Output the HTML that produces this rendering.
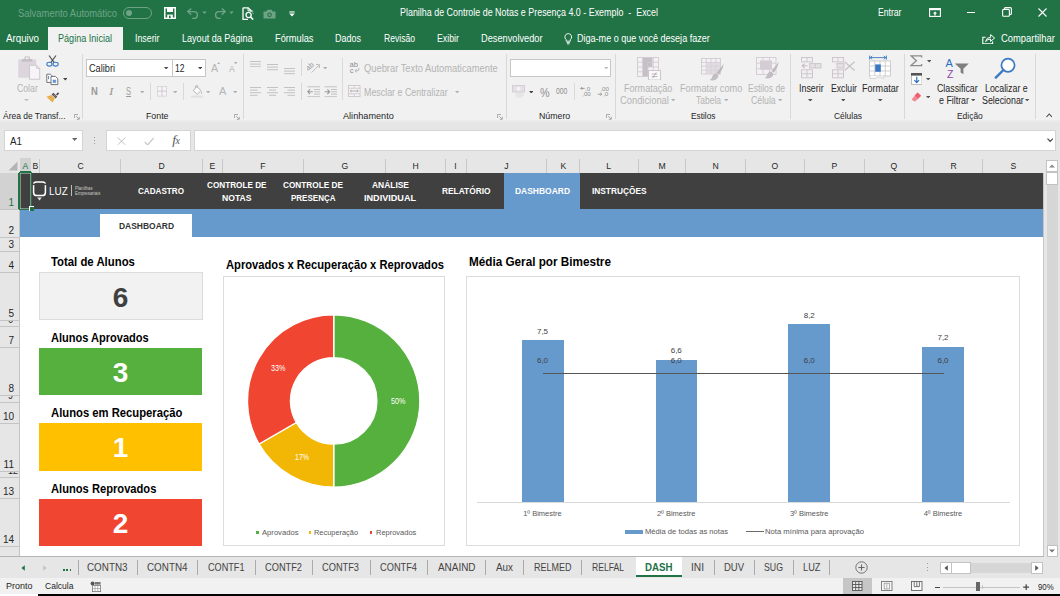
<!DOCTYPE html>
<html lang="pt-BR"><head><meta charset="utf-8"><title>Planilha de Controle de Notas e Presença 4.0 - Exemplo - Excel</title>
<style>
html,body{margin:0;padding:0;background:#fff;overflow:hidden;}
#app{position:relative;width:1060px;height:596px;overflow:hidden;background:#fff;font-family:"Liberation Sans", "DejaVu Sans", sans-serif;}
.r{position:absolute;display:block;box-sizing:border-box;}
.t{position:absolute;white-space:pre;line-height:1.15;transform-origin:0 50%;font-family:"Liberation Sans", "DejaVu Sans", sans-serif;}
</style></head>
<body><div id="app">
<div class="r" style="left:0px;top:0px;width:1060px;height:50px;background:#217346;"></div>
<span class="t" style="top:7.80px;font-size:10px;color:#6fa386;left:18.00px;transform:scaleX(0.9423);">Salvamento Automático</span>
<div class="r" style="left:123px;top:7px;width:29px;height:12px;border:1px solid #6fa386;border-radius:7px"></div>
<div class="r" style="left:126px;top:10px;width:6px;height:6px;border-radius:3px;background:#6fa386"></div>
<span class="t" style="top:6.60px;font-size:10px;color:#fff;left:400.00px;transform:scaleX(0.8909);">Planilha de Controle de Notas e Presença 4.0 - Exemplo  -  Excel</span>
<span class="t" style="top:6.60px;font-size:10px;color:#fff;left:878.00px;transform:scaleX(0.8629);">Entrar</span>
<svg class="r" style="left:164px;top:7px;" width="12" height="12" viewBox="0 0 12 12"><path d="M0.8,0.8 H11.2 V11.2 H0.8 Z" fill="none" stroke="#fff" stroke-width="1.5"/><rect x="3" y="1" width="6" height="4" fill="#fff"/><rect x="3.2" y="7.6" width="5.6" height="3.6" fill="#fff"/><rect x="5" y="8.6" width="1.6" height="2.6" fill="#217346"/></svg>
<svg class="r" style="left:186px;top:7px;" width="14" height="12" viewBox="0 0 14 12"><path d="M2,4.6 H8 A3.4,3.4 0 0 1 8,11.4 H6.2" fill="none" stroke="#6fa386" stroke-width="1.4"/><path d="M5.2,1.4 L1.8,4.6 L5.2,7.8" fill="none" stroke="#6fa386" stroke-width="1.4"/></svg>
<svg class="r" style="left:202px;top:11px;" width="5" height="4" viewBox="0 0 5 4"><path d="M0.3,0.5 H4.7 L2.5,3 Z" fill="#6fa386"/></svg>
<svg class="r" style="left:213px;top:7px;" width="14" height="12" viewBox="0 0 14 12"><path d="M12,4.6 H6 A3.4,3.4 0 0 0 6,11.4 H7.8" fill="none" stroke="#6fa386" stroke-width="1.4"/><path d="M8.8,1.4 L12.2,4.6 L8.8,7.8" fill="none" stroke="#6fa386" stroke-width="1.4"/></svg>
<svg class="r" style="left:229px;top:11px;" width="5" height="4" viewBox="0 0 5 4"><path d="M0.3,0.5 H4.7 L2.5,3 Z" fill="#6fa386"/></svg>
<svg class="r" style="left:241.5px;top:6.5px;" width="12" height="13.5" viewBox="0 0 12 13.5"><path d="M1,0.8 H6.2 L9,3.6 V5 M6,12.4 H1 V0.8" fill="none" stroke="#fff" stroke-width="1.3"/><path d="M6,0.8 V3.8 H9" fill="none" stroke="#fff" stroke-width="1"/><circle cx="6.6" cy="8" r="2.6" fill="#217346" stroke="#fff" stroke-width="1.3"/><path d="M8.6,10 L11.2,12.6" stroke="#fff" stroke-width="1.6"/><path d="M9.6,3.2 l1.4,1.6 M10.4,5.6 l0.8,1" stroke="#fff" stroke-width="0.8"/></svg>
<svg class="r" style="left:262.5px;top:8.5px;" width="13" height="10" viewBox="0 0 13 10"><path d="M0.5,2.5 H3.4 L4.4,0.8 H8.6 L9.6,2.5 H12.5 V9.5 H0.5 Z" fill="#6fa386"/><circle cx="6.5" cy="5.8" r="2.3" fill="#217346"/><circle cx="6.5" cy="5.8" r="1.2" fill="#6fa386"/></svg>
<svg class="r" style="left:288.5px;top:10.5px;" width="6" height="6" viewBox="0 0 6 6"><rect x="0.4" y="0.4" width="5.2" height="1.1" fill="#fff"/><path d="M0.2,2.6 H5.8 L3,5.6 Z" fill="#fff"/></svg>
<svg class="r" style="left:928.5px;top:7.5px;" width="12" height="9" viewBox="0 0 12 9"><rect x="0.6" y="0.6" width="10.8" height="7.8" fill="none" stroke="#fff" stroke-width="1.1"/><rect x="0.6" y="0.6" width="10.8" height="1.6" fill="#fff"/><path d="M6,3.4 L8.2,5.6 H6.7 V7.4 H5.3 V5.6 H3.8 Z" fill="#fff"/></svg>
<div class="r" style="left:966.5px;top:12px;width:8.5px;height:1px;background:#fff;"></div>
<svg class="r" style="left:1001.5px;top:7px;" width="10" height="10" viewBox="0 0 10 10"><rect x="0.6" y="2.4" width="6.8" height="6.8" rx="1" fill="none" stroke="#fff" stroke-width="1.1"/><path d="M2.6,2.4 V1.4 Q2.6,0.6 3.4,0.6 H8.4 Q9.4,0.6 9.4,1.6 V6.4 Q9.4,7.4 8.4,7.4 H7.4" fill="none" stroke="#fff" stroke-width="1.1"/></svg>
<svg class="r" style="left:1038px;top:7.7px;" width="9" height="9" viewBox="0 0 9 9"><path d="M0.5,0.5 L8.5,8.5 M8.5,0.5 L0.5,8.5" stroke="#fff" stroke-width="1.1"/></svg>
<svg class="r" style="left:564px;top:33px;" width="8.5" height="11.5" viewBox="0 0 8.5 11.5"><path d="M4.25,0.6 A3.4,3.4 0 0 1 6.3,6.7 V8.2 H2.2 V6.7 A3.4,3.4 0 0 1 4.25,0.6 Z" fill="none" stroke="#fff" stroke-width="0.9"/><path d="M2.6,9.6 H5.9 M3,10.9 H5.5" stroke="#fff" stroke-width="0.9"/></svg>
<svg class="r" style="left:981.5px;top:32.5px;" width="13.5" height="11.5" viewBox="0 0 13.5 11.5"><path d="M3.6,4.2 H0.8 V10.8 H10.6 V8.4" fill="none" stroke="#fff" stroke-width="1.1"/><path d="M3.6,8.6 Q4.2,4.4 8.6,4.2 V1.6 L12.6,5 L8.6,8.4 V6 Q5.6,6 3.6,8.6 Z" fill="none" stroke="#fff" stroke-width="1"/></svg>
<div class="r" style="left:47.5px;top:27px;width:75px;height:23px;background:#f1f1f1;"></div>
<span class="t" style="top:33.00px;font-size:10px;color:#fff;left:6.00px;transform:scaleX(0.9733);">Arquivo</span>
<span class="t" style="top:33.00px;font-size:10px;color:#217346;left:57.50px;transform:scaleX(0.9078);">Página Inicial</span>
<span class="t" style="top:33.00px;font-size:10px;color:#fff;left:134.50px;transform:scaleX(0.8814);">Inserir</span>
<span class="t" style="top:33.00px;font-size:10px;color:#fff;left:181.50px;transform:scaleX(0.9057);">Layout da Página</span>
<span class="t" style="top:33.00px;font-size:10px;color:#fff;left:274.50px;transform:scaleX(0.9235);">Fórmulas</span>
<span class="t" style="top:33.00px;font-size:10px;color:#fff;left:335.00px;transform:scaleX(0.8995);">Dados</span>
<span class="t" style="top:33.00px;font-size:10px;color:#fff;left:383.50px;transform:scaleX(0.8578);">Revisão</span>
<span class="t" style="top:33.00px;font-size:10px;color:#fff;left:437.00px;transform:scaleX(0.8795);">Exibir</span>
<span class="t" style="top:33.00px;font-size:10px;color:#fff;left:481.00px;transform:scaleX(0.9218);">Desenvolvedor</span>
<span class="t" style="top:33.00px;font-size:10px;color:#fff;left:577.40px;transform:scaleX(0.9049);">Diga-me o que você deseja fazer</span>
<span class="t" style="top:33.00px;font-size:10px;color:#fff;left:1000.50px;transform:scaleX(0.9397);">Compartilhar</span>
<div class="r" style="left:0px;top:50px;width:1060px;height:70px;background:#f1f1f1;"></div>
<div class="r" style="left:0px;top:120px;width:1060px;height:38px;background:#e6e6e6;"></div>
<div class="r" style="left:0px;top:120px;width:1060px;height:2px;background:#ebebeb;"></div>
<div class="r" style="left:82px;top:54px;width:1px;height:64.5px;background:#d8d8d8;"></div>
<div class="r" style="left:243px;top:54px;width:1px;height:64.5px;background:#d8d8d8;"></div>
<div class="r" style="left:506px;top:54px;width:1px;height:64.5px;background:#d8d8d8;"></div>
<div class="r" style="left:614.5px;top:54px;width:1px;height:64.5px;background:#d8d8d8;"></div>
<div class="r" style="left:790px;top:54px;width:1px;height:64.5px;background:#d8d8d8;"></div>
<div class="r" style="left:904px;top:54px;width:1px;height:64.5px;background:#d8d8d8;"></div>
<div class="r" style="left:1034.5px;top:54px;width:1px;height:64.5px;background:#d8d8d8;"></div>
<span class="t" style="top:110.85px;font-size:9.5px;color:#262626;left:3.00px;transform:scaleX(0.8899);">Área de Transf...</span>
<span class="t" style="top:110.85px;font-size:9.5px;color:#262626;left:145.50px;transform:scaleX(0.9260);">Fonte</span>
<span class="t" style="top:110.85px;font-size:9.5px;color:#262626;left:343.00px;transform:scaleX(0.9609);">Alinhamento</span>
<span class="t" style="top:110.85px;font-size:9.5px;color:#262626;left:538.75px;transform:scaleX(0.9246);">Número</span>
<span class="t" style="top:110.85px;font-size:9.5px;color:#262626;left:690.50px;transform:scaleX(0.8755);">Estilos</span>
<span class="t" style="top:110.85px;font-size:9.5px;color:#262626;left:834.00px;transform:scaleX(0.8836);">Células</span>
<span class="t" style="top:110.85px;font-size:9.5px;color:#262626;left:957.00px;transform:scaleX(0.8877);">Edição</span>
<span class="t" style="top:82.70px;font-size:10px;color:#b4b4b4;left:17.00px;transform:scaleX(0.8701);">Colar</span>
<div class="r" style="left:86px;top:59px;width:86.5px;height:17.5px;background:#fff;border:1px solid #c6c6c6"></div>
<div class="r" style="left:172px;top:59px;width:33.5px;height:17.5px;background:#fff;border:1px solid #c6c6c6"></div>
<span class="t" style="top:63.00px;font-size:10px;color:#262626;left:89.00px;transform:scaleX(0.9173);">Calibri</span>
<span class="t" style="top:63.00px;font-size:10px;color:#262626;left:175.00px;transform:scaleX(0.8539);">12</span>
<span class="t" style="top:85.35px;font-size:10.5px;color:#9a9a9a;font-weight:700;left:91.40px;transform:scaleX(0.8955);">N</span>
<span class="t" style="top:85.10px;font-size:11px;color:#9a9a9a;font-style:italic;left:108.80px;transform:scaleX(1.1983);font-family:'Liberation Serif',serif;">I</span>
<span class="t" style="top:85.15px;font-size:10.5px;color:#9a9a9a;left:126.00px;transform:scaleX(0.7127);text-decoration:underline;">S</span>
<span class="t" style="top:61.80px;font-size:11.2px;color:#b4b4b4;left:210.70px;transform:scaleX(0.9506);">A</span>
<span class="t" style="top:63.90px;font-size:9px;color:#b4b4b4;left:228.50px;transform:scaleX(0.9642);">A</span>
<span class="t" style="top:85.10px;font-size:11.2px;color:#b4b4b4;left:218.60px;transform:scaleX(0.9908);">A</span>
<svg class="r" style="left:17px;top:56px;" width="24" height="25" viewBox="0 0 24 25"><rect x="1.2" y="3.4" width="18.1" height="18.3" fill="#dcd6dc"/><rect x="4.9" y="3" width="10.4" height="2.7" fill="#c6c0c6"/><path d="M7.9,3.2 V1.9 Q7.9,1 8.8,1 H11.6 Q12.5,1 12.5,1.9 V3.2" fill="none" stroke="#c6c0c6" stroke-width="1.1"/><path d="M12.5,9.3 H19.6 L22.7,12.4 V23.3 H12.5 Z" fill="#f7f4f7" stroke="#cbc5cb" stroke-width="0.9"/><path d="M19.6,9.3 V12.4 H22.7" fill="none" stroke="#cbc5cb" stroke-width="0.9"/></svg>
<svg class="r" style="left:24.3px;top:98.5px;" width="5" height="2.6" viewBox="0 0 5 2.6"><path d="M0,0 H5 L2.5,2.6 Z" fill="#c4c4c4"/></svg>
<svg class="r" style="left:45.5px;top:55px;" width="13" height="12" viewBox="0 0 13 12"><path d="M3,0.5 L8.3,7.6 M10,0.5 L4.7,7.6" stroke="#505050" stroke-width="1.15" fill="none"/><ellipse cx="3.4" cy="9.2" rx="2.6" ry="1.9" fill="none" stroke="#3b78c3" stroke-width="1.1"/><ellipse cx="9.6" cy="9.2" rx="2.6" ry="1.9" fill="none" stroke="#3b78c3" stroke-width="1.1"/></svg>
<svg class="r" style="left:45.5px;top:73px;" width="13" height="12.5" viewBox="0 0 13 12.5"><path d="M0.8,1.2 H4.4 L5.8,2.6 V9.4 H0.8 Z" fill="#fff" stroke="#666" stroke-width="0.9"/><path d="M2.6,3.4 V6.2 M2,4 L2.6,3.4" stroke="#3b78c3" stroke-width="0.9" fill="none"/><path d="M5,3.4 H9.4 L11.8,5.8 V11.6 H5 Z" fill="#fff" stroke="#666" stroke-width="0.9"/><rect x="6.6" y="6.6" width="3.6" height="3.4" fill="#8db6e6"/><path d="M7,7.6 H9.8 M7,8.8 H9.8" stroke="#3b78c3" stroke-width="0.6"/></svg>
<svg class="r" style="left:62.5px;top:78.10000000000001px;" width="4.6" height="2.6" viewBox="0 0 4.6 2.6"><path d="M0,0 H4.6 L2.3,2.6 Z" fill="#444"/></svg>
<svg class="r" style="left:45.5px;top:91px;" width="14" height="12" viewBox="0 0 14 12"><path d="M0.4,5.8 L6.4,11.4 L9,7.6 L5.2,4 Z" fill="#e8b04e"/><path d="M5.6,3.6 L9.6,7.4 L11.2,5.4 L7.4,1.8 Z" fill="#4a4a4a"/><path d="M10,3.4 L12,1.2 L13.2,2.4 L11.2,4.6 Z" fill="#4a4a4a"/><path d="M6.6,4.4 L8.8,6.4 M7.6,3.4 L9.8,5.4" stroke="#f1f1f1" stroke-width="0.5"/></svg>
<svg class="r" style="left:73.5px;top:113.5px;" width="6" height="6" viewBox="0 0 6 6"><path d="M0.5,4 V0.5 H4" fill="none" stroke="#9a9a9a" stroke-width="0.8"/><path d="M2.2,2.2 L5,5 M5.3,2.8 V5.3 H2.8" fill="none" stroke="#9a9a9a" stroke-width="0.8"/></svg>
<svg class="r" style="left:164.20000000000002px;top:66.8px;" width="4.4" height="2.4" viewBox="0 0 4.4 2.4"><path d="M0,0 H4.4 L2.2,2.4 Z" fill="#444"/></svg>
<svg class="r" style="left:197.5px;top:66.8px;" width="4.4" height="2.4" viewBox="0 0 4.4 2.4"><path d="M0,0 H4.4 L2.2,2.4 Z" fill="#444"/></svg>
<svg class="r" style="left:217.2px;top:61.8px;" width="3.4" height="2.4" viewBox="0 0 3.4 2.4"><path d="M0,2.4 H3.4 L1.7,0 Z" fill="#b0b0b0"/></svg>
<svg class="r" style="left:233.8px;top:61.8px;" width="3.4" height="2.4" viewBox="0 0 3.4 2.4"><path d="M0,0 H3.4 L1.7,2.4 Z" fill="#b0b0b0"/></svg>
<svg class="r" style="left:139.5px;top:90.8px;" width="4.4" height="2.4" viewBox="0 0 4.4 2.4"><path d="M0,0 H4.4 L2.2,2.4 Z" fill="#b0b0b0"/></svg>
<div class="r" style="left:149.7px;top:83px;width:1px;height:17px;background:#d8d8d8;"></div>
<svg class="r" style="left:157px;top:86px;" width="10" height="10.5" viewBox="0 0 10 10.5"><rect x="0.4" y="0.4" width="9.2" height="9.7" fill="#f6f4f6" stroke="#d6d0d6" stroke-width="0.8"/><path d="M5,0.4 V10.1 M0.4,5.2 H9.6" stroke="#d6d0d6" stroke-width="1.2"/></svg>
<svg class="r" style="left:172.8px;top:90.8px;" width="4.4" height="2.4" viewBox="0 0 4.4 2.4"><path d="M0,0 H4.4 L2.2,2.4 Z" fill="#b0b0b0"/></svg>
<div class="r" style="left:183px;top:83px;width:1px;height:17px;background:#d8d8d8;"></div>
<svg class="r" style="left:190.5px;top:85px;" width="12" height="12.5" viewBox="0 0 12 12.5"><path d="M2.2,5.4 L6,1.6 L10,5.6 L6.2,9.4 Z" fill="#fafafa" stroke="#aaa" stroke-width="0.9"/><path d="M4.6,3 V1.4 Q4.6,0.4 5.6,0.4 Q6.6,0.4 6.6,1.4 V2.2" fill="none" stroke="#aaa" stroke-width="0.8"/><path d="M10.2,6.2 Q11.6,8 10.6,9 Q9.6,8.6 10.2,6.2 Z" fill="#aaa"/><rect x="0" y="10.6" width="12" height="1.9" fill="#e2dde2"/></svg>
<svg class="r" style="left:206.3px;top:90.8px;" width="4.4" height="2.4" viewBox="0 0 4.4 2.4"><path d="M0,0 H4.4 L2.2,2.4 Z" fill="#b0b0b0"/></svg>
<svg class="r" style="left:232.5px;top:90.8px;" width="4.4" height="2.4" viewBox="0 0 4.4 2.4"><path d="M0,0 H4.4 L2.2,2.4 Z" fill="#b0b0b0"/></svg>
<svg class="r" style="left:234.2px;top:113.5px;" width="6" height="6" viewBox="0 0 6 6"><path d="M0.5,4 V0.5 H4" fill="none" stroke="#9a9a9a" stroke-width="0.8"/><path d="M2.2,2.2 L5,5 M5.3,2.8 V5.3 H2.8" fill="none" stroke="#9a9a9a" stroke-width="0.8"/></svg>
<span class="t" style="top:63.00px;font-size:10px;color:#b4b4b4;left:363.75px;transform:scaleX(0.9338);">Quebrar Texto Automaticamente</span>
<span class="t" style="top:86.50px;font-size:10px;color:#b4b4b4;left:363.75px;transform:scaleX(0.8864);">Mesclar e Centralizar</span>
<div class="r" style="left:510px;top:59px;width:101.3px;height:17.5px;background:#fff;border:1px solid #c6c6c6"></div>
<span class="t" style="top:85.75px;font-size:12.5px;color:#8e8e8e;left:540.40px;transform:scaleX(0.8629);">%</span>
<span class="t" style="top:87.00px;font-size:8.6px;color:#8e8e8e;left:556.00px;transform:scaleX(0.7948);">000</span>
<svg class="r" style="left:249.7px;top:60.8px;" width="11" height="6.700000000000003" viewBox="0 0 11 6.700000000000003"><rect x="0" y="0.0" width="11" height="1" fill="#c2c2c2"/><rect x="0" y="2.6000000000000014" width="11" height="1" fill="#c2c2c2"/><rect x="0" y="5.200000000000003" width="11" height="1" fill="#c2c2c2"/></svg>
<svg class="r" style="left:267px;top:64px;" width="11" height="6.700000000000003" viewBox="0 0 11 6.700000000000003"><rect x="0" y="0" width="11" height="1" fill="#c2c2c2"/><rect x="0" y="2.5999999999999943" width="11" height="1" fill="#c2c2c2"/><rect x="0" y="5.200000000000003" width="11" height="1" fill="#c2c2c2"/></svg>
<svg class="r" style="left:284px;top:68px;" width="11" height="6.700000000000003" viewBox="0 0 11 6.700000000000003"><rect x="0" y="0" width="11" height="1" fill="#c2c2c2"/><rect x="0" y="2.5999999999999943" width="11" height="1" fill="#c2c2c2"/><rect x="0" y="5.200000000000003" width="11" height="1" fill="#c2c2c2"/></svg>
<div class="r" style="left:301px;top:59px;width:1px;height:17px;background:#d8d8d8;"></div>
<svg class="r" style="left:307px;top:61px;" width="13.5" height="12.5" viewBox="0 0 13.5 12.5"><text x="0.2" y="8.2" font-family="Liberation Sans, sans-serif" font-size="7.5" fill="#9a9a9a" transform="rotate(-40 3 8)">ab</text><path d="M4.6,11.6 L12,4.2 M9,3.6 L12.4,3.6 L12.4,7" fill="none" stroke="#b4b4b4" stroke-width="0.9"/></svg>
<svg class="r" style="left:322.6px;top:66.8px;" width="4.4" height="2.4" viewBox="0 0 4.4 2.4"><path d="M0,0 H4.4 L2.2,2.4 Z" fill="#b0b0b0"/></svg>
<div class="r" style="left:342px;top:58px;width:1px;height:42px;background:#dadada;"></div>
<svg class="r" style="left:349px;top:61px;" width="11" height="12.5" viewBox="0 0 11 12.5"><text x="0.6" y="5.8" font-family="Liberation Sans, sans-serif" font-size="7.6" fill="#8e8e8e">ab</text><text x="0.8" y="12" font-family="Liberation Sans, sans-serif" font-size="7.6" fill="#8e8e8e">c</text><path d="M9.8,7 V8.4 Q9.8,9.8 8.4,9.8 H6.4 M7.6,8.4 L6.2,9.8 L7.6,11.2" fill="none" stroke="#a8a8a8" stroke-width="0.9"/></svg>
<svg class="r" style="left:249.7px;top:87px;" width="11" height="9.299999999999997" viewBox="0 0 11 9.299999999999997"><rect x="0" y="0" width="11" height="1" fill="#c2c2c2"/><rect x="0" y="2.5999999999999943" width="7.5" height="1" fill="#c2c2c2"/><rect x="0" y="5.200000000000003" width="11" height="1" fill="#c2c2c2"/><rect x="0" y="7.799999999999997" width="7.5" height="1" fill="#c2c2c2"/></svg>
<svg class="r" style="left:267px;top:87px;" width="11" height="9.299999999999997" viewBox="0 0 11 9.299999999999997"><rect x="0" y="0" width="11" height="1" fill="#c2c2c2"/><rect x="2" y="2.5999999999999943" width="7" height="1" fill="#c2c2c2"/><rect x="0" y="5.200000000000003" width="11" height="1" fill="#c2c2c2"/><rect x="2" y="7.799999999999997" width="7" height="1" fill="#c2c2c2"/></svg>
<svg class="r" style="left:284px;top:87px;" width="11" height="9.299999999999997" viewBox="0 0 11 9.299999999999997"><rect x="0" y="0" width="11" height="1" fill="#c2c2c2"/><rect x="3.5" y="2.5999999999999943" width="7.5" height="1" fill="#c2c2c2"/><rect x="0" y="5.200000000000003" width="11" height="1" fill="#c2c2c2"/><rect x="3.5" y="7.799999999999997" width="7.5" height="1" fill="#c2c2c2"/></svg>
<div class="r" style="left:301px;top:83px;width:1px;height:17px;background:#d8d8d8;"></div>
<svg class="r" style="left:307px;top:85.5px;" width="13.5" height="11.5" viewBox="0 0 13.5 11.5"><rect x="0.4" y="0.3" width="12.6" height="1" fill="#c2c2c2"/><rect x="0.4" y="10.2" width="12.6" height="1" fill="#c2c2c2"/><rect x="7" y="3" width="6" height="1" fill="#c2c2c2"/><rect x="7" y="5.3" width="6" height="1" fill="#c2c2c2"/><rect x="7" y="7.6" width="6" height="1" fill="#c2c2c2"/><path d="M5.8,5.7 H1 M3,3.4 L0.8,5.7 L3,8" fill="none" stroke="#9a9a9a" stroke-width="1.1"/></svg>
<svg class="r" style="left:324px;top:85.5px;" width="13.5" height="11.5" viewBox="0 0 13.5 11.5"><rect x="0.4" y="0.3" width="12.6" height="1" fill="#c2c2c2"/><rect x="0.4" y="10.2" width="12.6" height="1" fill="#c2c2c2"/><rect x="7" y="3" width="6" height="1" fill="#c2c2c2"/><rect x="7" y="5.3" width="6" height="1" fill="#c2c2c2"/><rect x="7" y="7.6" width="6" height="1" fill="#c2c2c2"/><path d="M0.6,5.7 H5.4 M3.4,3.4 L5.6,5.7 L3.4,8" fill="none" stroke="#9a9a9a" stroke-width="1.1"/></svg>
<svg class="r" style="left:348px;top:85px;" width="12.5" height="12" viewBox="0 0 12.5 12"><rect x="0.5" y="0.5" width="11.5" height="11" fill="#f6f4f6" stroke="#d0cad0" stroke-width="1"/><path d="M0.5,3.2 H12 M0.5,8.8 H12 M6.2,0.5 V3.2 M6.2,8.8 V11.5" stroke="#d0cad0" stroke-width="1"/><path d="M2.2,6 H10.2 M3.6,4.8 L2.2,6 L3.6,7.2 M8.8,4.8 L10.2,6 L8.8,7.2" fill="none" stroke="#a8a8a8" stroke-width="0.9"/></svg>
<svg class="r" style="left:455.3px;top:90.8px;" width="4.4" height="2.4" viewBox="0 0 4.4 2.4"><path d="M0,0 H4.4 L2.2,2.4 Z" fill="#b0b0b0"/></svg>
<svg class="r" style="left:496.8px;top:113.5px;" width="6" height="6" viewBox="0 0 6 6"><path d="M0.5,4 V0.5 H4" fill="none" stroke="#9a9a9a" stroke-width="0.8"/><path d="M2.2,2.2 L5,5 M5.3,2.8 V5.3 H2.8" fill="none" stroke="#9a9a9a" stroke-width="0.8"/></svg>
<svg class="r" style="left:603.5px;top:67.0px;" width="4.4" height="2.4" viewBox="0 0 4.4 2.4"><path d="M0,0 H4.4 L2.2,2.4 Z" fill="#bdbdbd"/></svg>
<svg class="r" style="left:512px;top:85px;" width="13" height="12.5" viewBox="0 0 13 12.5"><rect x="0.4" y="0.4" width="12.2" height="6.6" fill="#e4dfe4" stroke="#d0cad0" stroke-width="0.8"/><circle cx="6.5" cy="3.7" r="2" fill="#f4f2f4"/><path d="M3.6,8.6 H11.6 M3.6,10.2 H11.6 M4.6,11.8 H10" stroke="#ddd" stroke-width="0.9"/></svg>
<svg class="r" style="left:528.9000000000001px;top:90.7px;" width="4.6" height="2.6" viewBox="0 0 4.6 2.6"><path d="M0,0 H4.6 L2.3,2.6 Z" fill="#444"/></svg>
<div class="r" style="left:573.5px;top:83px;width:1px;height:17px;background:#dadada;"></div>
<svg class="r" style="left:579.5px;top:86px;" width="12" height="11" viewBox="0 0 12 11"><text x="5" y="4.6" font-family="Liberation Sans, sans-serif" font-size="6.2" fill="#909090">,0</text><text x="2.2" y="10.4" font-family="Liberation Sans, sans-serif" font-size="6.2" fill="#909090">,00</text><path d="M4.6,2.4 H0.8 M2.2,1 L0.8,2.4 L2.2,3.8" fill="none" stroke="#909090" stroke-width="0.9"/></svg>
<svg class="r" style="left:596.5px;top:86px;" width="12" height="11" viewBox="0 0 12 11"><text x="3.4" y="4.6" font-family="Liberation Sans, sans-serif" font-size="6.2" fill="#909090">,00</text><text x="6" y="10.4" font-family="Liberation Sans, sans-serif" font-size="6.2" fill="#909090">,0</text><path d="M0.8,8.2 H4.8 M3.4,6.8 L4.8,8.2 L3.4,9.6" fill="none" stroke="#909090" stroke-width="0.9"/></svg>
<svg class="r" style="left:606px;top:113.5px;" width="6" height="6" viewBox="0 0 6 6"><path d="M0.5,4 V0.5 H4" fill="none" stroke="#9a9a9a" stroke-width="0.8"/><path d="M2.2,2.2 L5,5 M5.3,2.8 V5.3 H2.8" fill="none" stroke="#9a9a9a" stroke-width="0.8"/></svg>
<span class="t" style="top:83.40px;font-size:10px;color:#b4b4b4;left:624.30px;transform:scaleX(0.9071);">Formatação</span>
<span class="t" style="top:95.00px;font-size:10px;color:#b4b4b4;left:620.40px;transform:scaleX(0.9356);">Condicional</span>
<span class="t" style="top:83.40px;font-size:10px;color:#b4b4b4;left:680.40px;transform:scaleX(0.9189);">Formatar como</span>
<span class="t" style="top:95.00px;font-size:10px;color:#b4b4b4;left:696.00px;transform:scaleX(0.8484);">Tabela</span>
<span class="t" style="top:83.40px;font-size:10px;color:#b4b4b4;left:747.80px;transform:scaleX(0.8533);">Estilos de</span>
<span class="t" style="top:95.00px;font-size:10px;color:#b4b4b4;left:750.80px;transform:scaleX(0.8710);">Célula</span>
<span class="t" style="top:83.40px;font-size:10px;color:#262626;left:798.50px;transform:scaleX(0.8886);">Inserir</span>
<span class="t" style="top:83.40px;font-size:10px;color:#262626;left:830.50px;transform:scaleX(0.8662);">Excluir</span>
<span class="t" style="top:83.40px;font-size:10px;color:#262626;left:862.00px;transform:scaleX(0.9072);">Formatar</span>
<span class="t" style="top:83.40px;font-size:10px;color:#262626;left:937.00px;transform:scaleX(0.8824);">Classificar</span>
<span class="t" style="top:95.00px;font-size:10px;color:#262626;left:939.00px;transform:scaleX(0.8848);">e Filtrar</span>
<span class="t" style="top:83.40px;font-size:10px;color:#262626;left:984.80px;transform:scaleX(0.8830);">Localizar e</span>
<span class="t" style="top:95.00px;font-size:10px;color:#262626;left:982.00px;transform:scaleX(0.8844);">Selecionar</span>
<svg class="r" style="left:637px;top:56.5px;" width="24.5" height="23.5" viewBox="0 0 24.5 23.5"><rect x="0.5" y="0.5" width="21" height="19" fill="#f4f1f4" stroke="#d2ccd2" stroke-width="0.9"/><path d="M5.75,0.5 V19.5" stroke="#d2ccd2" stroke-width="0.9"/><path d="M11.00,0.5 V19.5" stroke="#d2ccd2" stroke-width="0.9"/><path d="M16.25,0.5 V19.5" stroke="#d2ccd2" stroke-width="0.9"/><path d="M0.5,5.25 H21.5" stroke="#d2ccd2" stroke-width="0.9"/><path d="M0.5,10.00 H21.5" stroke="#d2ccd2" stroke-width="0.9"/><path d="M0.5,14.75 H21.5" stroke="#d2ccd2" stroke-width="0.9"/><rect x="5.8" y="0.8" width="5" height="18.4" fill="#c6c0c6"/><rect x="10.8" y="5.4" width="4.6" height="4.4" fill="#c6c0c6"/><rect x="5.8" y="0.8" width="9.6" height="4.4" fill="#c6c0c6"/><rect x="11.4" y="13.6" width="12.2" height="9.4" fill="#fbfafb" stroke="#c6c0c6" stroke-width="0.9"/><path d="M14.6,17 H20.4 M14.6,19.6 H20.4 M19.2,15.4 L15.8,21.2" stroke="#b0aab0" stroke-width="0.9"/></svg>
<svg class="r" style="left:671.4px;top:98.6px;" width="4.4" height="2.4" viewBox="0 0 4.4 2.4"><path d="M0,0 H4.4 L2.2,2.4 Z" fill="#b0b0b0"/></svg>
<svg class="r" style="left:701px;top:57.6px;" width="24" height="23" viewBox="0 0 24 23"><rect x="0.5" y="0.5" width="19" height="15.5" fill="#f4f1f4" stroke="#d2ccd2" stroke-width="0.9"/><path d="M5.25,0.5 V16.0" stroke="#d2ccd2" stroke-width="0.9"/><path d="M10.00,0.5 V16.0" stroke="#d2ccd2" stroke-width="0.9"/><path d="M14.75,0.5 V16.0" stroke="#d2ccd2" stroke-width="0.9"/><path d="M0.5,4.38 H19.5" stroke="#d2ccd2" stroke-width="0.9"/><path d="M0.5,8.25 H19.5" stroke="#d2ccd2" stroke-width="0.9"/><path d="M0.5,12.12 H19.5" stroke="#d2ccd2" stroke-width="0.9"/><rect x="5.2" y="4.4" width="14.2" height="11.6" fill="#d9d4d9" opacity="0.75"/><path d="M23,5.6 L15.6,15 L17.8,16.8 Q22,11.4 23,5.6 Z" fill="#bdb8bd"/><path d="M15.2,15.6 Q12,15.8 11,19.6 Q10.2,22.2 7.8,21.6 Q11.6,23.6 15,21.6 Q17.8,19.6 17.2,17.2 Z" fill="#c2bdc2"/></svg>
<svg class="r" style="left:723.5px;top:98.6px;" width="4.4" height="2.4" viewBox="0 0 4.4 2.4"><path d="M0,0 H4.4 L2.2,2.4 Z" fill="#b0b0b0"/></svg>
<svg class="r" style="left:756px;top:56.5px;" width="24" height="23" viewBox="0 0 24 23"><rect x="0.5" y="0.5" width="19.5" height="17" fill="#f4f1f4" stroke="#d2ccd2" stroke-width="0.9"/><path d="M7.00,0.5 V17.5" stroke="#d2ccd2" stroke-width="0.9"/><path d="M13.50,0.5 V17.5" stroke="#d2ccd2" stroke-width="0.9"/><path d="M0.5,6.17 H20.0" stroke="#d2ccd2" stroke-width="0.9"/><path d="M0.5,11.83 H20.0" stroke="#d2ccd2" stroke-width="0.9"/><rect x="4" y="3.4" width="12" height="9.4" fill="#d4ced4"/><path d="M23,4.6 L15.6,14 L17.8,15.8 Q22,10.4 23,4.6 Z" fill="#bdb8bd"/><path d="M15.2,14.6 Q12,14.8 11,18.6 Q10.2,21.2 7.8,20.6 Q11.6,22.6 15,20.6 Q17.8,18.6 17.2,16.2 Z" fill="#c2bdc2"/></svg>
<svg class="r" style="left:777.8px;top:98.6px;" width="4.4" height="2.4" viewBox="0 0 4.4 2.4"><path d="M0,0 H4.4 L2.2,2.4 Z" fill="#b0b0b0"/></svg>
<svg class="r" style="left:800.5px;top:56.5px;" width="21" height="22" viewBox="0 0 21 22"><rect x="0.5" y="0.5" width="11" height="4.4" fill="#f2eff2" stroke="#cdc7cd" stroke-width="1"/><path d="M6.00,0.5 V4.9" stroke="#cdc7cd" stroke-width="1"/><rect x="8.6" y="6.6" width="11.4" height="4.4" fill="#e4e0e4" stroke="#cdc7cd" stroke-width="1"/><path d="M14.30,6.6 V11.0" stroke="#cdc7cd" stroke-width="1"/><rect x="0.5" y="12.8" width="11" height="8" fill="#f2eff2" stroke="#cdc7cd" stroke-width="1"/><path d="M6.00,12.8 V20.8" stroke="#cdc7cd" stroke-width="1"/><path d="M0.5,16.80 H11.5" stroke="#cdc7cd" stroke-width="1"/><path d="M6.4,8.8 H1.4 M3.6,6.6 L1.2,8.8 L3.6,11" fill="none" stroke="#c2bdc2" stroke-width="1.1"/></svg>
<svg class="r" style="left:808.2px;top:98.5px;" width="4.6" height="2.6" viewBox="0 0 4.6 2.6"><path d="M0,0 H4.6 L2.3,2.6 Z" fill="#555"/></svg>
<svg class="r" style="left:832px;top:56.5px;" width="23.5" height="22" viewBox="0 0 23.5 22"><rect x="0.5" y="0.5" width="11" height="4.4" fill="#f2eff2" stroke="#cdc7cd" stroke-width="1"/><path d="M6.00,0.5 V4.9" stroke="#cdc7cd" stroke-width="1"/><rect x="5" y="6.6" width="7" height="4.4" fill="#e4e0e4" stroke="#cdc7cd" stroke-width="1"/><rect x="0.5" y="12.8" width="11" height="8" fill="#f2eff2" stroke="#cdc7cd" stroke-width="1"/><path d="M6.00,12.8 V20.8" stroke="#cdc7cd" stroke-width="1"/><path d="M0.5,16.80 H11.5" stroke="#cdc7cd" stroke-width="1"/><path d="M12.6,4.8 L22.6,13.6 M22.6,4.8 L12.6,13.6" fill="none" stroke="#c8c3c8" stroke-width="1.3"/></svg>
<svg class="r" style="left:840.7px;top:98.5px;" width="4.6" height="2.6" viewBox="0 0 4.6 2.6"><path d="M0,0 H4.6 L2.3,2.6 Z" fill="#555"/></svg>
<svg class="r" style="left:869px;top:55.4px;" width="22" height="24.4" viewBox="0 0 22 24.4"><path d="M0.6,2.6 H17.4 M0.6,0.6 V4.6 M17.4,0.6 V4.6 M3.2,1 L1.2,2.6 L3.2,4.2 M14.8,1 L16.8,2.6 L14.8,4.2" fill="none" stroke="#3b78c3" stroke-width="0.9"/><rect x="0.5" y="6" width="21" height="15" fill="#fff" stroke="#c9c9c9" stroke-width="0.9"/><path d="M5.75,6 V21" stroke="#c9c9c9" stroke-width="0.9"/><path d="M11.00,6 V21" stroke="#c9c9c9" stroke-width="0.9"/><path d="M16.25,6 V21" stroke="#c9c9c9" stroke-width="0.9"/><path d="M0.5,11.00 H21.5" stroke="#c9c9c9" stroke-width="0.9"/><path d="M0.5,16.00 H21.5" stroke="#c9c9c9" stroke-width="0.9"/><rect x="6.2" y="9.4" width="5.6" height="7.4" fill="#3b78c3"/><path d="M1,21 V23.4 H6.6 L7.6,22 H12.4 L13.4,23.4 H14.6 V21" fill="#fff" stroke="#c9c9c9" stroke-width="0.8"/></svg>
<svg class="r" style="left:878.1px;top:98.5px;" width="4.6" height="2.6" viewBox="0 0 4.6 2.6"><path d="M0,0 H4.6 L2.3,2.6 Z" fill="#555"/></svg>
<svg class="r" style="left:910px;top:55px;" width="13" height="11.5" viewBox="0 0 13 11.5"><path d="M11.6,2.4 V0.8 H1 L6.4,5.8 L1,10.6 H11.6 V9" fill="none" stroke="#8c8c8c" stroke-width="1.3"/></svg>
<svg class="r" style="left:926.8px;top:60.199999999999996px;" width="4.4" height="2.4" viewBox="0 0 4.4 2.4"><path d="M0,0 H4.4 L2.2,2.4 Z" fill="#555"/></svg>
<svg class="r" style="left:910.5px;top:73px;" width="11.5" height="12" viewBox="0 0 11.5 12"><rect x="0.5" y="0.5" width="10.5" height="11" fill="#fff" stroke="#b8b8b8" stroke-width="0.9"/><rect x="0" y="0" width="11.5" height="2.6" fill="#555"/><path d="M5.75,3.8 V9.4 M3.4,7.2 L5.75,9.6 L8.1,7.2" fill="none" stroke="#2b6fc2" stroke-width="1.2"/></svg>
<svg class="r" style="left:926.0px;top:78.0px;" width="4.4" height="2.4" viewBox="0 0 4.4 2.4"><path d="M0,0 H4.4 L2.2,2.4 Z" fill="#555"/></svg>
<svg class="r" style="left:911px;top:92px;" width="10.5" height="9.5" viewBox="0 0 10.5 9.5"><path d="M6.6,0.4 L10,3.8 L4.6,9.2 H2.6 L0.6,7.2 Z" fill="#f28a96"/><path d="M6.6,0.4 L10,3.8 L7,6.8 L3.6,3.4 Z" fill="#ee5f70"/></svg>
<svg class="r" style="left:926.0px;top:96.0px;" width="4.4" height="2.4" viewBox="0 0 4.4 2.4"><path d="M0,0 H4.4 L2.2,2.4 Z" fill="#555"/></svg>
<svg class="r" style="left:945px;top:57.5px;" width="25" height="21" viewBox="0 0 25 21"><text x="0.6" y="9.2" font-family="Liberation Sans, sans-serif" font-size="11" fill="#2b6fc2">A</text><text x="2" y="19.8" font-family="Liberation Sans, sans-serif" font-size="10.5" fill="#8d44ad">Z</text><path d="M9.8,5.4 H23.8 L18.4,10.8 V16.2 L15.6,14.6 V10.8 Z" fill="#7f7f7f"/></svg>
<svg class="r" style="left:971.0px;top:98.8px;" width="4.4" height="2.4" viewBox="0 0 4.4 2.4"><path d="M0,0 H4.4 L2.2,2.4 Z" fill="#555"/></svg>
<svg class="r" style="left:994px;top:56.5px;" width="23" height="22" viewBox="0 0 23 22"><circle cx="14" cy="8.3" r="6.6" fill="#fff" stroke="#3b78c3" stroke-width="1.7"/><path d="M9.4,13 L1.8,20.6" stroke="#3b78c3" stroke-width="2.4" stroke-linecap="round"/></svg>
<svg class="r" style="left:1025.3999999999999px;top:98.8px;" width="4.4" height="2.4" viewBox="0 0 4.4 2.4"><path d="M0,0 H4.4 L2.2,2.4 Z" fill="#555"/></svg>
<svg class="r" style="left:1045.5px;top:113px;" width="6.5" height="4.5" viewBox="0 0 6.5 4.5"><path d="M0.5,4 L3.25,1 L6,4" fill="none" stroke="#444" stroke-width="1.1"/></svg>
<div class="r" style="left:4px;top:130px;width:78.7px;height:20.7px;background:#fff;border:1px solid #d4d4d4"></div>
<div class="r" style="left:106.2px;top:130px;width:85.2px;height:20.7px;background:#fff;border:1px solid #d4d4d4"></div>
<div class="r" style="left:194px;top:130px;width:861.7px;height:20.7px;background:#fff;border:1px solid #d4d4d4"></div>
<span class="t" style="top:135.25px;font-size:10.5px;color:#262626;left:9.50px;transform:scaleX(0.9343);">A1</span>
<svg class="r" style="left:72.2px;top:138.2px;" width="5.2" height="3" viewBox="0 0 5.2 3"><path d="M0,0 H5.2 L2.6,3 Z" fill="#666"/></svg>
<div class="r" style="left:94.1px;top:136.7px;width:1.1px;height:1.1px;background:#9a9a9a;"></div>
<div class="r" style="left:94.1px;top:140.0px;width:1.1px;height:1.1px;background:#9a9a9a;"></div>
<div class="r" style="left:94.1px;top:143.3px;width:1.1px;height:1.1px;background:#9a9a9a;"></div>
<svg class="r" style="left:116.5px;top:136.5px;" width="9" height="8.5" viewBox="0 0 9 8.5"><path d="M0.6,0.6 L8.4,7.9 M8.4,0.6 L0.6,7.9" stroke="#c4c4c4" stroke-width="1"/></svg>
<svg class="r" style="left:144px;top:136.5px;" width="10.5" height="8.5" viewBox="0 0 10.5 8.5"><path d="M0.6,4.8 L3.6,7.8 L9.8,0.8" fill="none" stroke="#c4c4c4" stroke-width="1.2"/></svg>
<span class="t" style="left:172.3px;top:132.3px;font-size:13.5px;font-style:italic;color:#555;font-family:'Liberation Serif',serif;letter-spacing:-0.6px">f<span style="font-size:10px">x</span></span>
<svg class="r" style="left:1046.5px;top:138px;" width="6.4" height="4.2" viewBox="0 0 6.4 4.2"><path d="M0.5,0.6 L3.2,3.4 L5.9,0.6" fill="none" stroke="#444" stroke-width="1.2"/></svg>
<div class="r" style="left:0px;top:158px;width:1060px;height:15px;background:#e6e6e6;"></div>
<div class="r" style="left:19.5px;top:158px;width:11.5px;height:15px;background:#d2d2d2;border-bottom:2px solid #217346"></div>
<span class="t" style="top:160.30px;font-size:9.8px;color:#217346;left:22.37px;transform:scaleX(0.88);transform-origin:50% 50%;">A</span>
<span class="t" style="top:160.30px;font-size:9.8px;color:#262626;left:32.12px;transform:scaleX(0.88);transform-origin:50% 50%;">B</span>
<div class="r" style="left:38.5px;top:159px;width:1px;height:14px;background:#c8c8c8;"></div>
<span class="t" style="top:160.30px;font-size:9.8px;color:#262626;left:76.64px;transform:scaleX(0.88);transform-origin:50% 50%;">C</span>
<div class="r" style="left:120.0px;top:159px;width:1px;height:14px;background:#c8c8c8;"></div>
<span class="t" style="top:160.30px;font-size:9.8px;color:#262626;left:158.14px;transform:scaleX(0.88);transform-origin:50% 50%;">D</span>
<div class="r" style="left:201.5px;top:159px;width:1px;height:14px;background:#c8c8c8;"></div>
<span class="t" style="top:160.30px;font-size:9.8px;color:#262626;left:209.12px;transform:scaleX(0.88);transform-origin:50% 50%;">E</span>
<div class="r" style="left:221.5px;top:159px;width:1px;height:14px;background:#c8c8c8;"></div>
<span class="t" style="top:160.30px;font-size:9.8px;color:#262626;left:260.12px;transform:scaleX(0.88);transform-origin:50% 50%;">F</span>
<div class="r" style="left:303.0px;top:159px;width:1px;height:14px;background:#c8c8c8;"></div>
<span class="t" style="top:160.30px;font-size:9.8px;color:#262626;left:340.89px;transform:scaleX(0.88);transform-origin:50% 50%;">G</span>
<div class="r" style="left:384.5px;top:159px;width:1px;height:14px;background:#c8c8c8;"></div>
<span class="t" style="top:160.30px;font-size:9.8px;color:#262626;left:411.89px;transform:scaleX(0.88);transform-origin:50% 50%;">H</span>
<div class="r" style="left:444.5px;top:159px;width:1px;height:14px;background:#c8c8c8;"></div>
<span class="t" style="top:160.30px;font-size:9.8px;color:#262626;left:454.30px;transform:scaleX(0.88);transform-origin:50% 50%;">I</span>
<div class="r" style="left:465.5px;top:159px;width:1px;height:14px;background:#c8c8c8;"></div>
<span class="t" style="top:160.30px;font-size:9.8px;color:#262626;left:504.09px;transform:scaleX(0.88);transform-origin:50% 50%;">J</span>
<div class="r" style="left:546.0px;top:159px;width:1px;height:14px;background:#c8c8c8;"></div>
<span class="t" style="top:160.30px;font-size:9.8px;color:#262626;left:559.87px;transform:scaleX(0.88);transform-origin:50% 50%;">K</span>
<div class="r" style="left:578.5px;top:159px;width:1px;height:14px;background:#c8c8c8;"></div>
<span class="t" style="top:160.30px;font-size:9.8px;color:#262626;left:606.35px;transform:scaleX(0.88);transform-origin:50% 50%;">L</span>
<div class="r" style="left:638.0px;top:159px;width:1px;height:14px;background:#c8c8c8;"></div>
<span class="t" style="top:160.30px;font-size:9.8px;color:#262626;left:658.15px;transform:scaleX(0.88);transform-origin:50% 50%;">M</span>
<div class="r" style="left:684.5px;top:159px;width:1px;height:14px;background:#c8c8c8;"></div>
<span class="t" style="top:160.30px;font-size:9.8px;color:#262626;left:711.89px;transform:scaleX(0.88);transform-origin:50% 50%;">N</span>
<div class="r" style="left:744.5px;top:159px;width:1px;height:14px;background:#c8c8c8;"></div>
<span class="t" style="top:160.30px;font-size:9.8px;color:#262626;left:771.14px;transform:scaleX(0.88);transform-origin:50% 50%;">O</span>
<div class="r" style="left:803.5px;top:159px;width:1px;height:14px;background:#c8c8c8;"></div>
<span class="t" style="top:160.30px;font-size:9.8px;color:#262626;left:831.12px;transform:scaleX(0.88);transform-origin:50% 50%;">P</span>
<div class="r" style="left:863.5px;top:159px;width:1px;height:14px;background:#c8c8c8;"></div>
<span class="t" style="top:160.30px;font-size:9.8px;color:#262626;left:890.39px;transform:scaleX(0.88);transform-origin:50% 50%;">Q</span>
<div class="r" style="left:923.0px;top:159px;width:1px;height:14px;background:#c8c8c8;"></div>
<span class="t" style="top:160.30px;font-size:9.8px;color:#262626;left:949.89px;transform:scaleX(0.88);transform-origin:50% 50%;">R</span>
<div class="r" style="left:982.0px;top:159px;width:1px;height:14px;background:#c8c8c8;"></div>
<span class="t" style="top:160.30px;font-size:9.8px;color:#262626;left:1009.87px;transform:scaleX(0.88);transform-origin:50% 50%;">S</span>
<svg class="r" style="left:8px;top:161px;" width="10" height="10" viewBox="0 0 10 10"><path d="M9.5,0.5 V9.5 H0.5 Z" fill="#b4b4b4"/></svg>
<div class="r" style="left:19.5px;top:173px;width:1023.5px;height:384px;background:#fff;"></div>
<div class="r" style="left:0px;top:173px;width:19.5px;height:384px;background:#e6e6e6;border-right:1px solid #c4c4c4"></div>
<div class="r" style="left:0px;top:208.5px;width:19.5px;height:1px;background:#c4c4c4;"></div>
<div class="r" style="left:0px;top:173px;width:19.5px;height:36px;background:#d2d2d2;border-right:2px solid #217346"></div>
<span class="t" style="top:196.70px;font-size:10px;color:#217346;left:8.44px;">1</span>
<div class="r" style="left:0px;top:236.5px;width:19.5px;height:1px;background:#c4c4c4;"></div>
<span class="t" style="top:224.70px;font-size:10px;color:#262626;left:8.44px;">2</span>
<div class="r" style="left:0px;top:250.5px;width:19.5px;height:1px;background:#c4c4c4;"></div>
<span class="t" style="top:238.70px;font-size:10px;color:#262626;left:8.44px;">3</span>
<div class="r" style="left:0px;top:271.5px;width:19.5px;height:1px;background:#c4c4c4;"></div>
<span class="t" style="top:259.70px;font-size:10px;color:#262626;left:8.44px;">4</span>
<div class="r" style="left:0px;top:319.5px;width:19.5px;height:1px;background:#c4c4c4;"></div>
<span class="t" style="top:307.70px;font-size:10px;color:#262626;left:8.44px;">5</span>
<div class="r" style="left:0px;top:326.0px;width:19.5px;height:1px;background:#c4c4c4;"></div>
<div class="r" style="left:0;top:320.6px;width:19px;height:5.3px;overflow:hidden"><span class="t" style="left:8.4px;top:-6.40px;font-size:10px;color:#262626;transform:scaleX(0.9)">6</span></div>
<div class="r" style="left:0px;top:347.0px;width:19.5px;height:1px;background:#c4c4c4;"></div>
<span class="t" style="top:335.20px;font-size:10px;color:#262626;left:8.44px;">7</span>
<div class="r" style="left:0px;top:395.0px;width:19.5px;height:1px;background:#c4c4c4;"></div>
<span class="t" style="top:383.20px;font-size:10px;color:#262626;left:8.44px;">8</span>
<div class="r" style="left:0px;top:401.5px;width:19.5px;height:1px;background:#c4c4c4;"></div>
<div class="r" style="left:0;top:396.1px;width:19px;height:5.3px;overflow:hidden"><span class="t" style="left:8.4px;top:-6.40px;font-size:10px;color:#262626;transform:scaleX(0.9)">9</span></div>
<div class="r" style="left:0px;top:422.5px;width:19.5px;height:1px;background:#c4c4c4;"></div>
<span class="t" style="top:410.70px;font-size:10px;color:#262626;left:2.88px;">10</span>
<div class="r" style="left:0px;top:470.5px;width:19.5px;height:1px;background:#c4c4c4;"></div>
<span class="t" style="top:458.70px;font-size:10px;color:#262626;left:3.61px;">11</span>
<div class="r" style="left:0px;top:477.0px;width:19.5px;height:1px;background:#c4c4c4;"></div>
<div class="r" style="left:0;top:471.6px;width:19px;height:5.3px;overflow:hidden"><span class="t" style="left:8.4px;top:-6.40px;font-size:10px;color:#262626;transform:scaleX(0.9)">12</span></div>
<div class="r" style="left:0px;top:498.0px;width:19.5px;height:1px;background:#c4c4c4;"></div>
<span class="t" style="top:486.20px;font-size:10px;color:#262626;left:2.88px;">13</span>
<div class="r" style="left:0px;top:546.0px;width:19.5px;height:1px;background:#c4c4c4;"></div>
<span class="t" style="top:534.20px;font-size:10px;color:#262626;left:2.88px;">14</span>
<div class="r" style="left:0px;top:556.5px;width:19.5px;height:1px;background:#c4c4c4;"></div>
<div class="r" style="left:19.5px;top:173px;width:1023.5px;height:36px;background:#404040;"></div>
<div class="r" style="left:19.5px;top:209px;width:1023.5px;height:28px;background:#6699cc;"></div>
<div class="r" style="left:504.2px;top:173px;width:76px;height:36px;background:#6699cc;"></div>
<div class="r" style="left:100px;top:214px;width:92px;height:23px;background:#fff;"></div>
<span class="t" style="top:186.35px;font-size:9.3px;color:#fff;font-weight:700;left:137.50px;transform:scaleX(0.8731);">CADASTRO</span>
<span class="t" style="top:186.35px;font-size:9.3px;color:#fff;font-weight:700;left:441.50px;transform:scaleX(0.8971);">RELATÓRIO</span>
<span class="t" style="top:186.35px;font-size:9.3px;color:#fff;font-weight:700;left:515.00px;transform:scaleX(0.9100);">DASHBOARD</span>
<span class="t" style="top:186.35px;font-size:9.3px;color:#fff;font-weight:700;left:591.50px;transform:scaleX(0.8941);">INSTRUÇÕES</span>
<span class="t" style="top:179.95px;font-size:9.3px;color:#fff;font-weight:700;left:207.00px;transform:scaleX(0.8792);">CONTROLE DE</span>
<span class="t" style="top:192.75px;font-size:9.3px;color:#fff;font-weight:700;left:222.00px;transform:scaleX(0.9259);">NOTAS</span>
<span class="t" style="top:179.95px;font-size:9.3px;color:#fff;font-weight:700;left:283.00px;transform:scaleX(0.8866);">CONTROLE DE</span>
<span class="t" style="top:192.75px;font-size:9.3px;color:#fff;font-weight:700;left:290.50px;transform:scaleX(0.8612);">PRESENÇA</span>
<span class="t" style="top:179.95px;font-size:9.3px;color:#fff;font-weight:700;left:371.50px;transform:scaleX(0.9066);">ANÁLISE</span>
<span class="t" style="top:192.75px;font-size:9.3px;color:#fff;font-weight:700;left:364.00px;transform:scaleX(0.9774);">INDIVIDUAL</span>
<span class="t" style="top:221.15px;font-size:9.3px;color:#333;font-weight:700;left:118.50px;transform:scaleX(0.9100);">DASHBOARD</span>
<svg class="r" style="left:32px;top:181px;" width="15" height="20.5" viewBox="0 0 15 20.5"><path d="M4.4,0.9 H10.6 Q13.4,0.9 13.4,3.8 V11.4 Q13.4,14.6 10.2,14.6 H4.8 Q1.6,14.6 1.6,11.4 V3.8 Q1.6,0.9 4.4,0.9 Z" fill="none" stroke="#fff" stroke-width="1.5"/><rect x="0" y="2.6" width="4" height="1.5" fill="#404040"/><rect x="11" y="2.6" width="4" height="1.5" fill="#404040"/><path d="M5.2,16.4 H9.8 L7.5,19.6 Z" fill="#e6e6e6"/></svg>
<span class="t" style="top:185.20px;font-size:10.6px;color:#fff;left:49.00px;transform:scaleX(0.9343);">LUZ</span>
<div class="r" style="left:71.3px;top:184.5px;width:0.7px;height:11.2px;background:#bdbdbd;"></div>
<span class="t" style="top:186.10px;font-size:4.6px;color:#c8c8c8;left:74.70px;transform:scaleX(0.9434);">Planilhas</span>
<span class="t" style="top:190.90px;font-size:4.6px;color:#c8c8c8;left:74.70px;transform:scaleX(0.9436);">Empresariais</span>
<div class="r" style="left:19.2px;top:172.2px;width:12.6px;height:37.4px;background:transparent;border:1.6px solid #217346;box-shadow:inset 0 0 0 0.5px #c9d9cf"></div>
<div class="r" style="left:28.6px;top:206px;width:5.4px;height:5.4px;background:#fff;"></div>
<div class="r" style="left:29.7px;top:207.1px;width:4px;height:4px;background:#217346;"></div>
<span class="t" style="top:255.10px;font-size:13px;color:#000;font-weight:700;left:50.60px;transform:scaleX(0.8734);">Total de Alunos</span>
<div class="r" style="left:39px;top:272px;width:163.5px;height:48.3px;background:#f2f2f2;border:1px solid #dcdcdc"></div>
<span class="t" style="top:281.70px;font-size:28px;color:#404040;font-weight:700;left:112.71px;">6</span>
<span class="t" style="top:330.60px;font-size:13px;color:#000;font-weight:700;left:50.60px;transform:scaleX(0.8489);">Alunos Aprovados</span>
<div class="r" style="left:39.3px;top:347.7px;width:163.2px;height:47.6px;background:#55b03d;"></div>
<span class="t" style="top:356.80px;font-size:28px;color:#fff;font-weight:700;left:112.71px;">3</span>
<span class="t" style="top:406.10px;font-size:13px;color:#000;font-weight:700;left:50.60px;transform:scaleX(0.8661);">Alunos em Recuperação</span>
<div class="r" style="left:39.3px;top:423.2px;width:163.2px;height:47.6px;background:#ffc000;"></div>
<span class="t" style="top:432.30px;font-size:28px;color:#fff;font-weight:700;left:112.71px;">1</span>
<span class="t" style="top:481.60px;font-size:13px;color:#000;font-weight:700;left:50.60px;transform:scaleX(0.8583);">Alunos Reprovados</span>
<div class="r" style="left:39.3px;top:498.7px;width:163.2px;height:47.3px;background:#f04530;"></div>
<span class="t" style="top:507.80px;font-size:28px;color:#fff;font-weight:700;left:112.71px;">2</span>
<span class="t" style="top:258.30px;font-size:13px;color:#000;font-weight:700;left:225.50px;transform:scaleX(0.8596);">Aprovados x Recuperação x Reprovados</span>
<div class="r" style="left:223px;top:276px;width:222px;height:270.3px;background:#fff;border:1px solid #dcdcdc"></div>
<svg class="r" style="left:224px;top:276.5px;" width="220" height="270" viewBox="224 276.5 220 270"><path d="M333.70,314.20 A86.2,86.2 0 0 1 333.70,486.60 L333.70,443.60 A43.2,43.2 0 0 0 333.70,357.20 Z" fill="#55b03d" stroke="#fff" stroke-width="1.4"/><path d="M333.70,486.60 A86.2,86.2 0 0 1 259.05,443.50 L296.29,422.00 A43.2,43.2 0 0 0 333.70,443.60 Z" fill="#f2b705" stroke="#fff" stroke-width="1.4"/><path d="M259.05,443.50 A86.2,86.2 0 0 1 333.70,314.20 L333.70,357.20 A43.2,43.2 0 0 0 296.29,422.00 Z" fill="#f04530" stroke="#fff" stroke-width="1.4"/></svg>
<span class="t" style="top:396.60px;font-size:8.2px;color:#fff;left:391.00px;transform:scaleX(0.8847);">50%</span>
<span class="t" style="top:364.40px;font-size:8.2px;color:#fff;left:270.80px;transform:scaleX(0.8908);">33%</span>
<span class="t" style="top:453.10px;font-size:8.2px;color:#fff;left:294.70px;transform:scaleX(0.8602);">17%</span>
<span class="t" style="top:528.20px;font-size:8px;color:#595959;left:261.50px;transform:scaleX(0.9542);">Aprovados</span>
<span class="t" style="top:528.20px;font-size:8px;color:#595959;left:314.40px;transform:scaleX(0.9245);">Recuperação</span>
<span class="t" style="top:528.20px;font-size:8px;color:#595959;left:375.50px;transform:scaleX(0.9342);">Reprovados</span>
<div class="r" style="left:256px;top:531.3px;width:2.5px;height:2.5px;background:#55b03d;"></div>
<div class="r" style="left:308.8px;top:531.3px;width:2.5px;height:2.5px;background:#f2b705;"></div>
<div class="r" style="left:369.7px;top:531.3px;width:2.5px;height:2.5px;background:#f04530;"></div>
<span class="t" style="top:255.10px;font-size:13px;color:#000;font-weight:700;left:469.00px;transform:scaleX(0.9010);">Média Geral por Bimestre</span>
<div class="r" style="left:465.7px;top:275.5px;width:554.8px;height:270.3px;background:#fff;border:1px solid #dcdcdc"></div>
<div class="r" style="left:521.5px;top:340px;width:42.0px;height:162px;background:#6699cc;"></div>
<span class="t" style="top:326.80px;font-size:8px;color:#404040;left:536.94px;">7,5</span>
<span class="t" style="top:355.90px;font-size:8px;color:#404040;left:536.94px;">6,0</span>
<span class="t" style="top:509.75px;font-size:7.5px;color:#595959;left:523.20px;">1º Bimestre</span>
<div class="r" style="left:655.5px;top:359.5px;width:41.5px;height:142.5px;background:#6699cc;"></div>
<span class="t" style="top:346.30px;font-size:8px;color:#404040;left:670.69px;">6,6</span>
<span class="t" style="top:355.90px;font-size:8px;color:#404040;left:670.69px;">6,0</span>
<span class="t" style="top:509.75px;font-size:7.5px;color:#595959;left:656.95px;">2º Bimestre</span>
<div class="r" style="left:788.2px;top:324.3px;width:42.09999999999991px;height:177.7px;background:#6699cc;"></div>
<span class="t" style="top:311.10px;font-size:8px;color:#404040;left:803.69px;">8,2</span>
<span class="t" style="top:355.90px;font-size:8px;color:#404040;left:803.69px;">6,0</span>
<span class="t" style="top:509.75px;font-size:7.5px;color:#595959;left:789.95px;">3º Bimestre</span>
<div class="r" style="left:922px;top:346.5px;width:42px;height:155.5px;background:#6699cc;"></div>
<span class="t" style="top:333.30px;font-size:8px;color:#404040;left:937.44px;">7,2</span>
<span class="t" style="top:355.90px;font-size:8px;color:#404040;left:937.44px;">6,0</span>
<span class="t" style="top:509.75px;font-size:7.5px;color:#595959;left:923.70px;">4º Bimestre</span>
<div class="r" style="left:477px;top:501.5px;width:533px;height:1px;background:#d9d9d9;"></div>
<div class="r" style="left:542.5px;top:372.5px;width:401.3px;height:1px;background:#555;"></div>
<div class="r" style="left:625px;top:529.5px;width:18px;height:4px;background:#6699cc;"></div>
<span class="t" style="top:527.75px;font-size:7.5px;color:#595959;left:645.00px;transform:scaleX(1.0155);">Média de todas as notas</span>
<div class="r" style="left:746px;top:530.7px;width:18px;height:1.3px;background:#6a6a6a;"></div>
<span class="t" style="top:527.75px;font-size:7.5px;color:#595959;left:765.00px;transform:scaleX(1.0236);">Nota mínima para aprovação</span>
<div class="r" style="left:1043.5px;top:158px;width:16.5px;height:399px;background:#e6e6e6;"></div>
<div class="r" style="left:1043px;top:173px;width:1px;height:384px;background:#c6c6c6;"></div>
<div class="r" style="left:1046.5px;top:184px;width:11px;height:361px;background:#d6d6d6;"></div>
<div class="r" style="left:1046px;top:160px;width:11.5px;height:11.5px;background:#fff;border:1px solid #c2c2c2"></div>
<svg class="r" style="left:1048.8px;top:163.8px;" width="6" height="4" viewBox="0 0 6 4"><path d="M0,3.6 H6 L3,0.4 Z" fill="#8a8a8a"/></svg>
<div class="r" style="left:1046px;top:171.5px;width:11.5px;height:13px;background:#fff;border:1px solid #c2c2c2"></div>
<div class="r" style="left:1046.5px;top:545px;width:11.5px;height:11.5px;background:#fff;border:1px solid #c2c2c2"></div>
<svg class="r" style="left:1049.2px;top:549.2px;" width="6" height="4" viewBox="0 0 6 4"><path d="M0,0.4 H6 L3,3.6 Z" fill="#777"/></svg>
<div class="r" style="left:0px;top:557px;width:1060px;height:21.5px;background:#e6e6e6;"></div>
<div class="r" style="left:0px;top:556px;width:1043.5px;height:1px;background:#b4b4b4;"></div>
<div class="r" style="left:635.5px;top:557px;width:46.5px;height:19.5px;background:#fff;border-bottom:2px solid #217346"></div>
<span class="t" style="top:561.25px;font-size:10.5px;color:#444;left:87.00px;transform:scaleX(0.9381);">CONTN3</span>
<span class="t" style="top:561.25px;font-size:10.5px;color:#444;left:146.50px;transform:scaleX(0.9381);">CONTN4</span>
<span class="t" style="top:561.25px;font-size:10.5px;color:#444;left:207.50px;transform:scaleX(0.8690);">CONTF1</span>
<span class="t" style="top:561.25px;font-size:10.5px;color:#444;left:264.50px;transform:scaleX(0.8810);">CONTF2</span>
<span class="t" style="top:561.25px;font-size:10.5px;color:#444;left:322.00px;transform:scaleX(0.8810);">CONTF3</span>
<span class="t" style="top:561.25px;font-size:10.5px;color:#444;left:379.50px;transform:scaleX(0.8810);">CONTF4</span>
<span class="t" style="top:561.25px;font-size:10.5px;color:#444;left:437.50px;transform:scaleX(0.9449);">ANAIND</span>
<span class="t" style="top:561.25px;font-size:10.5px;color:#444;left:495.50px;transform:scaleX(0.9396);">Aux</span>
<span class="t" style="top:561.25px;font-size:10.5px;color:#444;left:533.50px;transform:scaleX(0.8568);">RELMED</span>
<span class="t" style="top:561.25px;font-size:10.5px;color:#444;left:592.00px;transform:scaleX(0.8182);">RELFAL</span>
<span class="t" style="top:561.25px;font-size:10.5px;color:#217346;font-weight:700;left:644.50px;transform:scaleX(0.9239);">DASH</span>
<span class="t" style="top:561.25px;font-size:10.5px;color:#444;left:691.00px;transform:scaleX(0.9686);">INI</span>
<span class="t" style="top:561.25px;font-size:10.5px;color:#444;left:724.00px;transform:scaleX(0.9020);">DUV</span>
<span class="t" style="top:561.25px;font-size:10.5px;color:#444;left:764.00px;transform:scaleX(0.8346);">SUG</span>
<span class="t" style="top:561.25px;font-size:10.5px;color:#444;left:802.50px;transform:scaleX(0.8819);">LUZ</span>
<div class="r" style="left:77.5px;top:559.8px;width:1px;height:15px;background:#ababab;"></div>
<div class="r" style="left:137.0px;top:559.8px;width:1px;height:15px;background:#ababab;"></div>
<div class="r" style="left:197.0px;top:559.8px;width:1px;height:15px;background:#ababab;"></div>
<div class="r" style="left:254.5px;top:559.8px;width:1px;height:15px;background:#ababab;"></div>
<div class="r" style="left:312.0px;top:559.8px;width:1px;height:15px;background:#ababab;"></div>
<div class="r" style="left:369.5px;top:559.8px;width:1px;height:15px;background:#ababab;"></div>
<div class="r" style="left:427.0px;top:559.8px;width:1px;height:15px;background:#ababab;"></div>
<div class="r" style="left:485.0px;top:559.8px;width:1px;height:15px;background:#ababab;"></div>
<div class="r" style="left:522.5px;top:559.8px;width:1px;height:15px;background:#ababab;"></div>
<div class="r" style="left:581.0px;top:559.8px;width:1px;height:15px;background:#ababab;"></div>
<div class="r" style="left:713.5px;top:559.8px;width:1px;height:15px;background:#ababab;"></div>
<div class="r" style="left:753.5px;top:559.8px;width:1px;height:15px;background:#ababab;"></div>
<div class="r" style="left:792.5px;top:559.8px;width:1px;height:15px;background:#ababab;"></div>
<div class="r" style="left:828.9px;top:559.8px;width:1px;height:15px;background:#ababab;"></div>
<svg class="r" style="left:20.5px;top:564.5px;" width="4" height="6" viewBox="0 0 4 6"><path d="M3.8,0.2 V5.8 L0.4,3 Z" fill="#217346"/></svg>
<svg class="r" style="left:43px;top:564.5px;" width="4" height="6" viewBox="0 0 4 6"><path d="M0.2,0.2 V5.8 L3.6,3 Z" fill="#c4c4c4"/></svg>
<div class="r" style="left:62.8px;top:568.8px;width:1.8px;height:1.8px;background:#217346;"></div>
<div class="r" style="left:66.2px;top:568.8px;width:1.8px;height:1.8px;background:#217346;"></div>
<div class="r" style="left:69.6px;top:568.8px;width:1.8px;height:1.8px;background:#217346;"></div>
<svg class="r" style="left:855px;top:560.5px;" width="13" height="13" viewBox="0 0 13 13"><circle cx="6.5" cy="6.5" r="5.7" fill="none" stroke="#666" stroke-width="0.9"/><path d="M6.5,3.4 V9.6 M3.4,6.5 H9.6" stroke="#666" stroke-width="1.1"/></svg>
<div class="r" style="left:926.7px;top:563.3px;width:1.1px;height:1.1px;background:#9a9a9a;"></div>
<div class="r" style="left:926.7px;top:566.6px;width:1.1px;height:1.1px;background:#9a9a9a;"></div>
<div class="r" style="left:926.7px;top:569.9px;width:1.1px;height:1.1px;background:#9a9a9a;"></div>
<div class="r" style="left:970px;top:562.5px;width:61.5px;height:10.5px;background:#d6d6d6;"></div>
<div class="r" style="left:940px;top:562px;width:11.5px;height:11.5px;background:#fff;border:1px solid #c2c2c2"></div>
<svg class="r" style="left:943.8px;top:564.8px;" width="4" height="6" viewBox="0 0 4 6"><path d="M3.8,0.2 V5.8 L0.4,3 Z" fill="#555"/></svg>
<div class="r" style="left:950.5px;top:562px;width:20px;height:11.5px;background:#fff;border:1px solid #c2c2c2"></div>
<div class="r" style="left:1031.3px;top:562px;width:11.5px;height:11.5px;background:#fff;border:1px solid #c2c2c2"></div>
<svg class="r" style="left:1035.4px;top:564.8px;" width="4" height="6" viewBox="0 0 4 6"><path d="M0.2,0.2 V5.8 L3.6,3 Z" fill="#555"/></svg>
<div class="r" style="left:0px;top:578px;width:1060px;height:16px;background:#f1f1f1;"></div>
<span class="t" style="top:581.25px;font-size:9.5px;color:#262626;left:5.50px;transform:scaleX(0.9464);">Pronto</span>
<span class="t" style="top:581.25px;font-size:9.5px;color:#262626;left:45.00px;transform:scaleX(0.8994);">Calcula</span>
<svg class="r" style="left:89.5px;top:581px;" width="11" height="11" viewBox="0 0 11 11"><circle cx="2.6" cy="2.4" r="2" fill="#555"/><rect x="5" y="1" width="5.6" height="2.6" fill="#777"/><rect x="2.4" y="4.6" width="8.2" height="6" fill="#fff" stroke="#777" stroke-width="0.8"/><path d="M5,4.6 V10.6 M7.8,4.6 V10.6 M2.4,7.6 H10.6" stroke="#999" stroke-width="0.7"/></svg>
<div class="r" style="left:843px;top:578px;width:29px;height:16px;background:#c6c6c6;"></div>
<svg class="r" style="left:852px;top:581.3px;" width="10.5" height="10" viewBox="0 0 10.5 10"><rect x="0.5" y="0.5" width="9.5" height="9" fill="#e9e9e9" stroke="#555" stroke-width="0.9"/><path d="M3.67,0.5 V9.5" stroke="#555" stroke-width="0.9"/><path d="M6.83,0.5 V9.5" stroke="#555" stroke-width="0.9"/><path d="M0.5,3.50 H10.0" stroke="#555" stroke-width="0.9"/><path d="M0.5,6.50 H10.0" stroke="#555" stroke-width="0.9"/></svg>
<svg class="r" style="left:881px;top:581.3px;" width="11.5" height="10" viewBox="0 0 11.5 10"><rect x="0.5" y="0.5" width="10.5" height="9" fill="#f8f8f8" stroke="#777" stroke-width="0.9"/><rect x="3.2" y="2.2" width="5.2" height="5.8" fill="none" stroke="#999" stroke-width="0.8"/><path d="M5.8,2.2 V8" stroke="#999" stroke-width="0.7"/></svg>
<svg class="r" style="left:911px;top:581.3px;" width="11.5" height="10" viewBox="0 0 11.5 10"><rect x="0.5" y="0.5" width="10.5" height="9" fill="#f8f8f8" stroke="#666" stroke-width="0.9"/><path d="M3.2,0.5 V5.6 H8.4 V0.5 M5.8,0.5 V5.6" fill="none" stroke="#666" stroke-width="0.9"/></svg>
<div class="r" style="left:935px;top:586.6px;width:5px;height:1.2px;background:#444;"></div>
<div class="r" style="left:943px;top:586.7px;width:77px;height:1px;background:#c4c4c4;"></div>
<div class="r" style="left:981.5px;top:585.2px;width:1.2px;height:4px;background:#c4c4c4;"></div>
<div class="r" style="left:976.3px;top:582.2px;width:3.5px;height:8.4px;background:#666;"></div>
<svg class="r" style="left:1022.8px;top:583.9px;" width="6.4" height="6.4" viewBox="0 0 6.4 6.4"><path d="M3.2,0.2 V6.2 M0.2,3.2 H6.2" stroke="#444" stroke-width="1.2"/></svg>
<span class="t" style="top:581.85px;font-size:9.5px;color:#262626;left:1038.00px;transform:scaleX(0.8256);">90%</span>
<div class="r" style="left:37.5px;top:593.5px;width:1022.5px;height:2.5px;background:#000;"></div>
</div></body></html>
